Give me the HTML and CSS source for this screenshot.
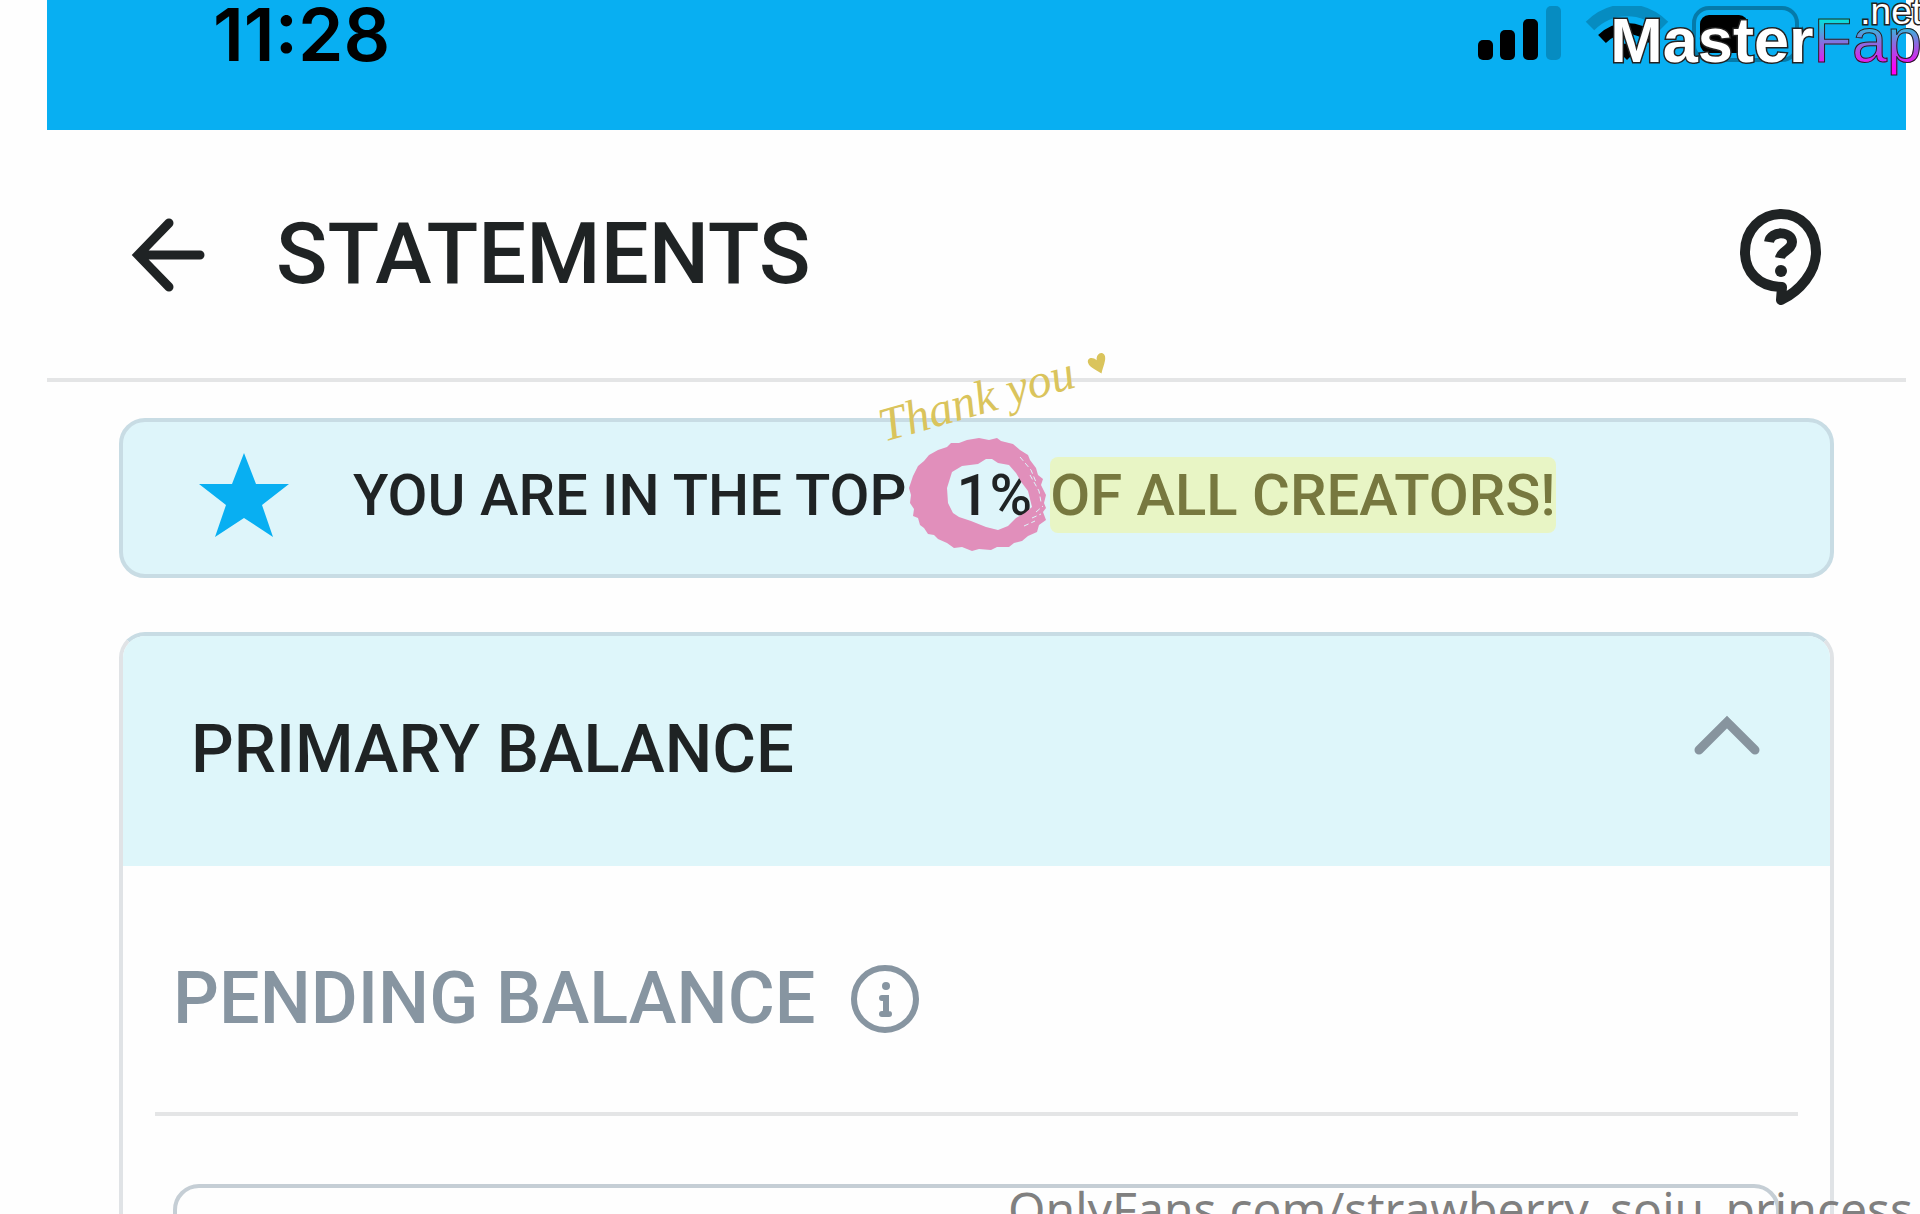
FILE: index.html
```
<!DOCTYPE html>
<html lang="en">
<head>
    <meta charset="UTF-8">
    <meta name="viewport" content="width=device-width, initial-scale=1.0">
    <title>Statements</title>
    <link rel="stylesheet" href="styles.css">
</head>
<body>
    <div class="screen">
        <div class="status-bar">
            <span class="time">11:28</span>
            <div class="status-icons">
                <svg class="signal" viewBox="0 0 84 54" aria-hidden="true">
                    <rect x="0" y="34" width="15" height="20" rx="5"/>
                    <rect x="22" y="24" width="15" height="30" rx="5"/>
                    <rect x="45" y="13" width="15" height="41" rx="5"/>
                    <rect x="68" y="0" width="15" height="54" rx="5" opacity="0.2"/>
                </svg>
                <svg class="wifi" viewBox="0 0 84 54" aria-hidden="true">
                    <path d="M5 20C26 -1 58 -1 79 20" fill="none" stroke="#000" stroke-width="12" opacity="0.2"/>
                    <path d="M17 33C31 19 53 19 67 33" fill="none" stroke="#000" stroke-width="11"/>
                    <path d="M42 54L30 42Q42 33 54 42Z"/>
                </svg>
                <svg class="battery" viewBox="0 0 118 56" aria-hidden="true">
                    <rect x="2" y="2" width="103" height="52" rx="15" fill="none" stroke="#000" stroke-width="4" opacity="0.3"/>
                    <rect x="8" y="9" width="48" height="38" rx="9"/>
                    <path d="M110 20Q117 28 110 36Z" opacity="0.35"/>
                </svg>
            </div>
        </div>

        <header class="header">
            <button type="button" class="icon-button" aria-label="Back">
                <svg class="back-icon" viewBox="0 0 76 76">
                    <path d="M39 7L8 39L39 71M8 39H70" fill="none" stroke="currentColor" stroke-width="9" stroke-linecap="round" stroke-linejoin="miter"/>
                </svg>
            </button>
            <h1>STATEMENTS</h1>
            <button type="button" class="icon-button help" aria-label="Help">
                <svg class="help-icon" viewBox="0 0 82 96">
                    <path d="M41 91L42 78C18 78 5 62 5 43C5 21 21 5 41 5C61 5 76 21 76 43C76 63 60 82 41 91Z" fill="none" stroke="currentColor" stroke-width="10" stroke-linejoin="round"/>
                    <path d="M29 33C31 21 52 22 52 33C52 41 41 42 40 49" fill="none" stroke="currentColor" stroke-width="10"/>
                    <circle cx="41" cy="62" r="6" fill="currentColor"/>
                </svg>
            </button>
        </header>

        <main class="content">
            <section class="notice">
                <svg class="star" viewBox="0 0 90 84" aria-hidden="true">
                    <path d="M45 0L57 31H90L63 52L74 84L45 65L16 84L27 52L0 31H33Z"/>
                </svg>
                <p class="notice-text">
                    <span>YOU ARE IN THE TOP</span>
                    <span class="rank">1%
                        <svg class="ring" viewBox="0 0 138 116" aria-hidden="true">
                            <path fill-rule="evenodd" d="M58 3L70 1L80 3L88 1L92 4L104 7L111 13L119 18L121 23L127 31L129 38L134 42L132 48L137 58L135 66L137 71L134 75L137 83L130 88L128 95L119 99L113 104L105 106L100 110L88 110L82 113L70 112L63 114L53 110L45 111L38 106L29 102L25 98L19 97L15 91L11 88L9 81L4 79L5 72L1 66L2 58L0 51L4 39L9 29L15 24L20 18L29 13L38 10L42 6L50 6Z
                                M43 35L53 29L69 27L77 22L83 22L89 26L100 28L107 36L113 46L119 54L121 62L123 70L116 76L107 81L99 89L89 93L77 90L62 84L50 80L44 76L39 66L38 51Z"/>
                            <path class="scratch" d="M111 20L122 33L127 45M121 38L130 54L132 65M127 75L134 69M123 81L132 77M115 89L126 84"/>
                        </svg>
                    </span>
                    <mark>OF ALL CREATORS!</mark>
                </p>
                <div class="thanks">
                    <span>Thank you</span>
                    <svg class="heart" viewBox="0 0 20 22" aria-hidden="true">
                        <path d="M11 21C7 16 1 12 1 7C1 2 7 2 10 7C11 1 17 -1 19 4C20 9 14 15 11 21Z"/>
                    </svg>
                </div>
            </section>

            <section class="balance">
                <div class="balance-head">
                    <h2>PRIMARY BALANCE</h2>
                    <button type="button" class="icon-button" aria-label="Collapse">
                        <svg class="chevron" viewBox="0 0 66 70">
                            <path d="M5 36L33 8L61 36" fill="none" stroke="currentColor" stroke-width="9" stroke-linecap="round"/>
                        </svg>
                    </button>
                </div>
                <div class="balance-body">
                    <div class="pending">
                        <h3>PENDING BALANCE</h3>
                        <button type="button" class="icon-button" aria-label="About pending balance">
                            <svg class="info-icon" viewBox="0 0 68 68">
                                <circle cx="34" cy="34" r="31" fill="none" stroke="currentColor" stroke-width="6"/>
                                <circle cx="35" cy="21" r="4" fill="currentColor"/>
                                <path d="M31 33H35V48M31 49H38" fill="none" stroke="currentColor" stroke-width="6" stroke-linecap="round"/>
                            </svg>
                        </button>
                    </div>
                    <div class="amount-box"></div>
                </div>
            </section>
        </main>
    </div>

    <div class="site-logo"><span class="logo-main">Master</span><span class="logo-accent">Fap</span><span class="logo-tld">.net</span></div>
    <div class="credit">OnlyFans.com/strawberry_soju_princess</div>
</body>
</html>
```
FILE: styles.css
```
* {
    box-sizing: border-box;
}
body {
    position: relative;
    height: 100vh;
    margin: 0;
    overflow: hidden;
    background-color: #fefefe;
    color: #1f2324;
    font-family: Roboto, Arial, sans-serif;
}
h1, h2, h3, p {
    margin: 0;
    font-weight: 500;
}
svg {
    display: block;
}
.screen {
    display: flex;
    flex-direction: column;
    height: 100%;
    margin: 0 14px 0 47px;
}
.icon-button {
    padding: 0;
    border: none;
    background: none;
    color: inherit;
    cursor: pointer;
}

/* status bar */
.status-bar {
    display: flex;
    flex-shrink: 0;
    justify-content: space-between;
    align-items: flex-start;
    height: 130px;
    padding: 0 96px 0 166px;
    background-color: #08aff2;
    color: #000;
}
.time {
    font-family: Inter, sans-serif;
    font-size: 73px;
    font-weight: 600;
    line-height: 70px;
}
.status-icons {
    display: flex;
    gap: 23px;
    padding-top: 6px;
}
.signal, .wifi {
    width: 84px;
    height: 54px;
}
.battery {
    width: 118px;
    height: 56px;
}

/* page header */
.header {
    display: flex;
    flex-shrink: 0;
    align-items: center;
    height: 252px;
    padding: 0 84px 0 83px;
    border-bottom: 4px solid #e4e5e6;
}
.back-icon {
    width: 76px;
    height: 76px;
}
h1 {
    margin-left: 70px;
    font-size: 85px;
    line-height: 100px;
}
.help {
    margin-left: auto;
    padding-top: 6px;
}
.help-icon {
    width: 82px;
    height: 96px;
}

.content {
    display: flex;
    flex: 1;
    flex-direction: column;
    min-height: 0;
    padding: 36px 72px 0;
}

/* top creators notice */
.notice {
    position: relative;
    display: flex;
    flex-shrink: 0;
    align-items: center;
    gap: 64px;
    height: 160px;
    margin-bottom: 54px;
    padding: 0 76px 6px;
    border: 4px solid #c8dce4;
    border-radius: 26px;
    background-color: #def5fa;
}
.star {
    width: 90px;
    height: 84px;
    fill: #08aff2;
}
.notice-text {
    display: flex;
    align-items: center;
    font-size: 58px;
    line-height: 76px;
    white-space: nowrap;
}
.rank {
    position: relative;
    margin: 0 18px 0 50px;
}
.ring {
    position: absolute;
    top: -20px;
    left: -48px;
    width: 138px;
    height: 116px;
    fill: #e18fbb;
}
.scratch {
    fill: none;
    stroke: #def5fa;
    stroke-width: 1;
    stroke-dasharray: 5 3;
}
mark {
    border-radius: 8px;
    background-color: #e8f5c5;
    color: #77783f;
}
.thanks {
    position: absolute;
    top: -56px;
    left: 752px;
    display: flex;
    align-items: center;
    gap: 16px;
    color: #dac45c;
    font-family: "Liberation Serif", serif;
    font-size: 48px;
    font-style: italic;
    line-height: 56px;
    transform: rotate(-16deg);
}
.heart {
    width: 20px;
    height: 22px;
    fill: #dac45c;
}

/* balance card */
.balance {
    flex: 1;
    min-height: 0;
    overflow: hidden;
    border: 4px solid #e0e3e6;
    border-top-color: #c8dce4;
    border-bottom: none;
    border-radius: 26px 26px 0 0;
}
.balance-head {
    display: flex;
    justify-content: space-between;
    align-items: center;
    height: 230px;
    padding: 0 70px 4px 68px;
    background-color: #def6fa;
}
h2 {
    font-size: 67px;
    line-height: 80px;
}
.chevron {
    width: 66px;
    height: 70px;
    color: #87949e;
}
.balance-body {
    padding: 0 32px;
}
.pending {
    display: flex;
    align-items: center;
    gap: 36px;
    height: 250px;
    padding: 20px 18px 0;
    border-bottom: 4px solid #e4e5e6;
    color: #8795a1;
}
h3 {
    font-size: 72px;
    line-height: 84px;
}
.info-icon {
    width: 68px;
    height: 68px;
}
.amount-box {
    height: 240px;
    margin: 68px 18px 0;
    border: 4px solid #c5ced5;
    border-radius: 26px;
}

/* overlays */
.site-logo {
    position: absolute;
    top: 0;
    right: -2px;
    font-family: "Liberation Sans", Arial, sans-serif;
    font-size: 63px;
    line-height: 80px;
}
.logo-main, .logo-tld {
    color: #fff;
    -webkit-text-stroke: 3px #222;
    paint-order: stroke fill;
}
.logo-main {
    font-weight: bold;
}
.logo-accent {
    background: linear-gradient(#00e5dc 20%, #8b6be0 55%, #ff00f5 90%);
    -webkit-background-clip: text;
    background-clip: text;
    color: transparent;
    -webkit-text-stroke: 1px #222;
}
.logo-tld {
    position: absolute;
    top: -8px;
    right: 0;
    font-size: 37px;
    line-height: 40px;
}
.credit {
    position: absolute;
    right: 7px;
    bottom: -27px;
    color: #808080;
    font-family: "Noto Sans", sans-serif;
    font-size: 48px;
    line-height: 64px;
}
```
